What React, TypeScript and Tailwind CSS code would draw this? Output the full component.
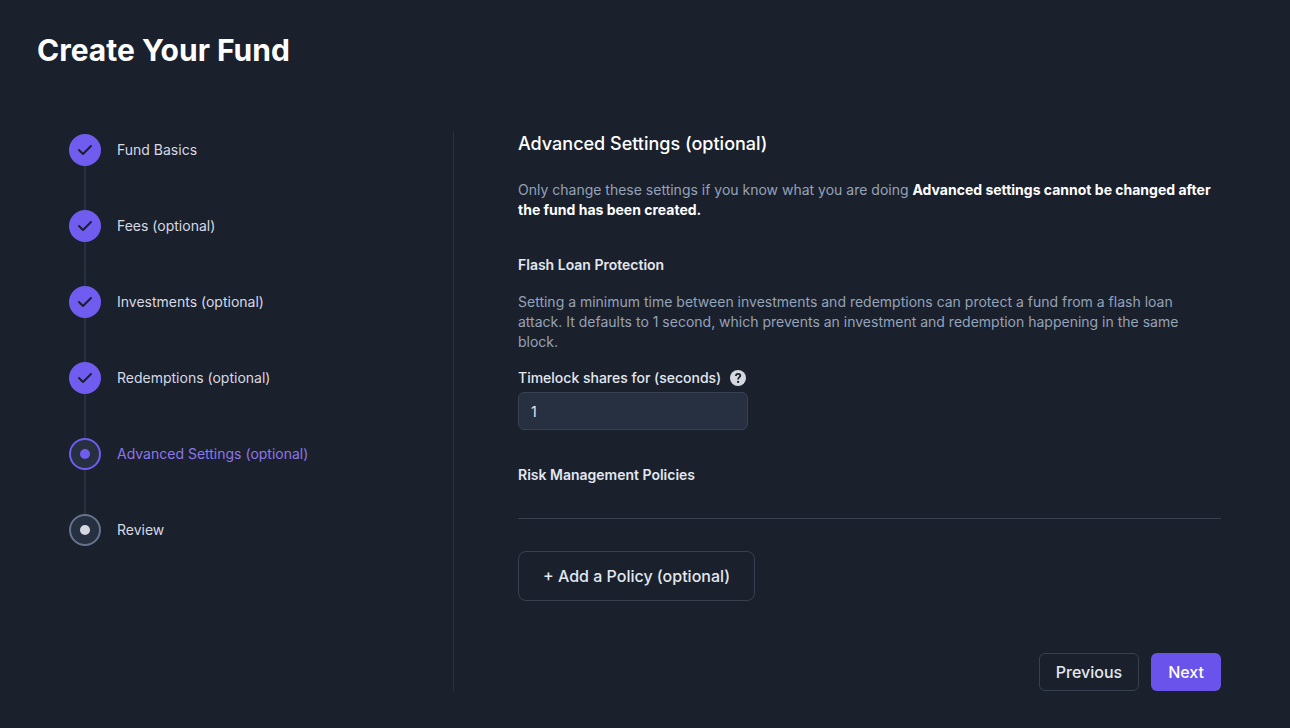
import { Fragment } from "react";

const steps = [
  { label: "Fund Basics", state: "done" },
  { label: "Fees (optional)", state: "done" },
  { label: "Investments (optional)", state: "done" },
  { label: "Redemptions (optional)", state: "done" },
  { label: "Advanced Settings (optional)", state: "current" },
  { label: "Review", state: "upcoming" },
];

function StepMarker({ state }: { state: string }) {
  if (state === "done") {
    return (
      <span className="flex size-8 items-center justify-center rounded-full bg-[#705df0]">
        <svg viewBox="0 0 20 20" className="size-5" fill="#1b202d" aria-hidden="true">
          <path
            fillRule="evenodd"
            clipRule="evenodd"
            d="M16.707 5.293a1 1 0 010 1.414l-8 8a1 1 0 01-1.414 0l-4-4a1 1 0 011.414-1.414L8 12.586l7.293-7.293a1 1 0 011.414 0z"
          />
        </svg>
      </span>
    );
  }
  if (state === "current") {
    return (
      <span className="flex size-8 items-center justify-center rounded-full border-2 border-[#705df0] bg-[#273040]">
        <span className="size-2.5 rounded-full bg-[#705df0]" />
      </span>
    );
  }
  return (
    <span className="flex size-8 items-center justify-center rounded-full border-2 border-[#64748b] bg-[#273040]">
      <span className="size-2.5 rounded-full bg-[#d6d8df]" />
    </span>
  );
}

export default function App() {
  return (
    <div className="min-h-screen bg-[#1b202d] px-[37px] pt-8 pb-9 font-['Inter',sans-serif] text-sm leading-5 text-[#e2e8f0]">
      <h1 className="text-3xl leading-9 font-bold text-white">Create Your Fund</h1>
      <div className="mt-16 flex pr-8 pl-8">
        <nav aria-label="Progress" className="w-96 shrink-0 pt-0.5">
          <ol>
            {steps.map((step, i) => (
              <Fragment key={step.label}>
                {i > 0 && <li aria-hidden="true" className="ml-[15px] h-11 w-0.5 bg-[#273040]" />}
                <li>
                  <a
                    href="#"
                    aria-current={step.state === "current" ? "step" : undefined}
                    className="flex items-center gap-4"
                  >
                    <StepMarker state={step.state} />
                    <span className={step.state === "current" ? "text-[#8b77e8]" : "text-[#d6dae3]"}>
                      {step.label}
                    </span>
                  </a>
                </li>
              </Fragment>
            ))}
          </ol>
        </nav>
        <form
          className="min-w-0 flex-1 border-l border-[#2a303e] pl-16"
          onSubmit={(e) => e.preventDefault()}
        >
          <h2 className="text-lg leading-6 font-medium text-white">Advanced Settings (optional)</h2>
          <p className="mt-6 pr-2 text-[#94a3b8]">
            Only change these settings if you know what you are doing{" "}
            <strong className="font-bold text-white">
              Advanced settings cannot be changed after the fund has been created.
            </strong>
          </p>
          <h3 className="mt-[35px] font-semibold">Flash Loan Protection</h3>
          <p className="mt-[17px] pr-2 text-[#94a3b8]">
            Setting a minimum time between investments and redemptions can protect a fund from a flash loan
            attack. It defaults to 1 second, which prevents an investment and redemption happening in the same
            block.
          </p>
          <div className="mt-4 flex items-center gap-[9px]">
            <label htmlFor="timelock" className="font-medium">
              Timelock shares for (seconds)
            </label>
            <button type="button" aria-label="Help">
              <svg viewBox="0 0 16 16" className="size-4" fill="none" aria-hidden="true">
                <circle cx="8" cy="8" r="8" fill="#d6d8df" />
                <path
                  d="M5.9 5.9C5.9 4.6 6.8 3.9 8.1 3.9C9.4 3.9 10.3 4.6 10.3 5.7C10.3 7.2 8.1 7.3 8.1 9.6"
                  stroke="#1b202d"
                  strokeWidth="1.8"
                />
                <path d="M7.1 10.9h2v2h-2z" fill="#1b202d" />
              </svg>
            </button>
          </div>
          <input
            id="timelock"
            type="text"
            defaultValue="1"
            className="mt-1 block h-[38px] w-[230px] rounded-md border border-[#374151] bg-[#273040] px-3 outline-none"
          />
          <h3 className="mt-[35px] font-semibold">Risk Management Policies</h3>
          <hr className="mt-[33px] border-[#374151]" />
          <button
            type="button"
            className="mt-8 h-[50px] rounded-lg border border-[#374151] px-6 text-base font-medium"
          >
            + Add a Policy (optional)
          </button>
          <div className="mt-[52px] flex justify-end gap-3">
            <button type="button" className="h-[38px] rounded-md border border-[#374151] px-4 text-base font-medium">
              Previous
            </button>
            <button type="submit" className="h-[38px] rounded-md bg-[#6953eb] px-[17px] text-base font-medium text-white">
              Next
            </button>
          </div>
        </form>
      </div>
    </div>
  );
}
